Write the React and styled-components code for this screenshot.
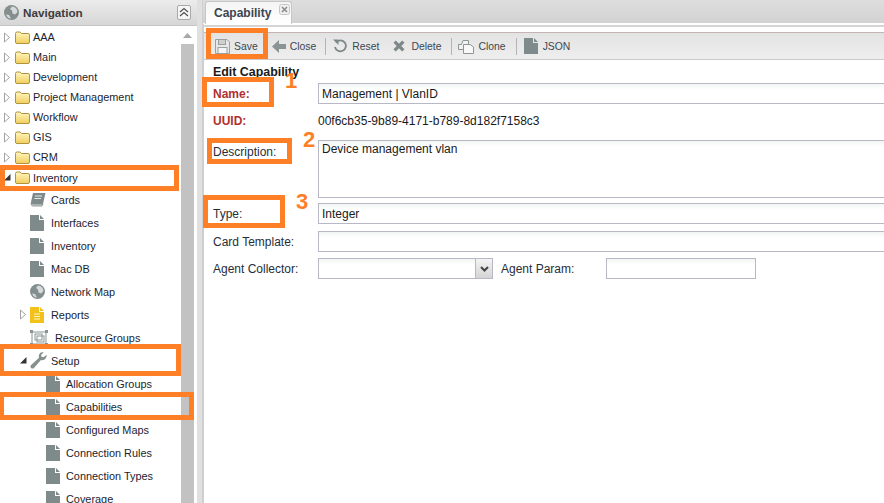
import React from "react";
import styled, { createGlobalStyle } from "styled-components";

const Global = createGlobalStyle`
  html, body { margin: 0; padding: 0; width: 884px; height: 503px; overflow: hidden; background: #fff; }
  body { font-family: "Liberation Sans", sans-serif; font-size: 10.9px; color: #1a1a1a; }
  * { box-sizing: border-box; }
`;

const Page = styled.div`
  position: relative;
  display: flex;
  width: 884px;
  height: 503px;
  overflow: hidden;
`;

/* ---------- navigation ---------- */
const Nav = styled.aside`
  width: 197px;
  flex: none;
  display: flex;
  flex-direction: column;
  background: #fff;
`;
const NavHeader = styled.header`
  height: 26px;
  flex: none;
  display: flex;
  align-items: center;
  padding: 0 6px 1px 4px;
  gap: 4px;
  background: linear-gradient(#ececec, #d6d6d6);
  border-bottom: 1px solid #c4c4c4;
`;
const NavTitle = styled.span`
  flex: 1;
  font-weight: 700;
  font-size: 11.7px;
  color: #3c3c3c;
`;
const Collapse = styled.span`
  width: 14px;
  height: 15px;
  display: flex;
  align-items: center;
  justify-content: center;
  background: #f6f6f6;
  border: 1px solid #a8a8a8;
  border-radius: 2px;
`;
const NavBody = styled.div`
  flex: 1;
  display: flex;
  min-height: 0;
`;
const Tree = styled.ul`
  list-style: none;
  margin: 0;
  padding: 1px 0 0;
  width: 181px;
  flex: none;
  overflow: hidden;
`;
const Row = styled.li`
  height: ${p => p.$h}px;
  display: flex;
  align-items: center;
  padding-left: ${p => p.$indent}px;
  white-space: nowrap;
  color: #1c2430;
`;
const Toggle = styled.span`
  width: 9px;
  height: 12px;
  flex: none;
  display: flex;
  align-items: center;
  margin-right: ${p => p.$gap}px;
`;
const RowIcon = styled.span`
  width: ${p => p.$w}px;
  display: flex;
  flex: none;
  align-items: center;
`;
const Scrollbar = styled.div`
  width: 13px;
  flex: none;
  display: flex;
  flex-direction: column;
  background: #fff;
`;
const ScrollUp = styled.div`
  height: 18px;
  flex: none;
  display: flex;
  align-items: center;
  justify-content: center;
`;
const ScrollThumb = styled.div`
  flex: 1;
  background: #c2c2c2;
`;
const Splitter = styled.div`
  width: 6px;
  flex: none;
  background: #e0e0e0;
  border-right: 1px solid #cfcfcf;
`;

/* ---------- main panel ---------- */
const Main = styled.main`
  flex: 1;
  min-width: 0;
  display: flex;
  flex-direction: column;
  background: #fff;
`;
const TabStrip = styled.div`
  height: 23px;
  flex: none;
  display: flex;
  align-items: flex-end;
  padding-left: 2px;
  background: linear-gradient(#dedede, #d2d2d2);
`;
const Tab = styled.div`
  width: 87px;
  height: 23px;
  margin-bottom: -1px;
  position: relative;
  display: flex;
  align-items: center;
  padding: 0 0 1px 8px;
  font-weight: 700;
  font-size: 12px;
  color: #3a4450;
  background: linear-gradient(#f4f4f4, #fff);
  border: 1px solid #c6c6c6;
  border-bottom: 0;
  border-radius: 3px 3px 0 0;
`;
const TabClose = styled.span`
  position: absolute;
  top: 2px;
  right: 1px;
  display: flex;
`;
const Band = styled.div`
  height: 9px;
  flex: none;
  background: #fff;
  border-top: 2px solid #fff;
  box-shadow: inset 0 2px 0 #d4d4d4;
  border-left: 1px solid #d0d0d0;
`;
const Content = styled.div`
  flex: 1;
  min-height: 0;
  border-left: 1px solid #cfcfcf;
  padding-left: 3px;
  background: #fff;
`;
const Toolbar = styled.div`
  height: 28px;
  margin-left: -3px;
  display: flex;
  align-items: center;
  padding-left: 11px;
  font-size: 10.4px;
  background: linear-gradient(#e3e3e3, #eeeeee);
  border-top: 1px solid #c4b4b4;
  border-bottom: 1px solid #cccccc;
`;
const ToolButton = styled.span`
  display: flex;
  align-items: center;
  gap: ${p => p.$gap ?? 4}px;
  margin-right: ${p => p.$mr ?? 0}px;
  color: #3c4650;
`;
const ToolSep = styled.span`
  width: 1px;
  height: 17px;
  flex: none;
  background: #b4b4b4;
  margin-right: ${p => p.$mr}px;
`;
const Form = styled.form`
  padding-left: 6px;
  margin: 0;
  font-size: 12px;
`;
const FormTitle = styled.h2`
  margin: 0;
  height: 23px;
  display: flex;
  align-items: center;
  font-size: 12.4px;
  font-weight: 700;
  color: #1a1a1a;
`;
const FieldRow = styled.div`
  display: flex;
  align-items: ${p => (p.$top ? "flex-start" : "center")};
  height: ${p => p.$h}px;
  margin-top: ${p => p.$mt ?? 0}px;
  padding-bottom: ${p => p.$pb ?? 0}px;
  white-space: nowrap;
`;
const Label = styled.label`
  width: 105px;
  flex: none;
  color: ${p => (p.$required ? "#b03030" : "#262e38")};
  font-weight: ${p => (p.$required ? 700 : 400)};
  line-height: ${p => (p.$top ? "24px" : "normal")};
`;
const InputBox = styled.div`
  flex: 1;
  min-width: 700px;
  height: 100%;
  padding: ${p => (p.$top ? "1px 3px" : "0 3px")};
  display: flex;
  align-items: ${p => (p.$top ? "flex-start" : "center")};
  border: 1px solid #b8b8c6;
  background: linear-gradient(#f2f5f4, #fff 6px);
  color: #1a1a1a;
`;
const Combo = styled.div`
  width: 175px;
  height: 100%;
  flex: none;
  display: flex;
  justify-content: flex-end;
  border: 1px solid #b8b8c6;
  background: linear-gradient(#f2f5f4, #fff 6px);
`;
const ComboButton = styled.span`
  width: 17px;
  display: flex;
  align-items: center;
  justify-content: center;
  background: linear-gradient(#f4f4f4, #d4d4d4);
  border-left: 1px solid #b8b8c6;
`;
const InlineLabel = styled.label`
  width: 105px;
  flex: none;
  margin-left: 8px;
  color: #262e38;
`;
const SmallInput = styled.div`
  width: 150px;
  height: 100%;
  flex: none;
  border: 1px solid #b8b8c6;
  background: linear-gradient(#f2f5f4, #fff 6px);
`;

/* ---------- annotations over the page ---------- */
const Mark = styled.div`
  position: absolute;
  left: ${p => p.$x}px;
  top: ${p => p.$y}px;
  width: ${p => p.$w}px;
  height: ${p => p.$h}px;
  border: 5px solid #ff7f27;
  pointer-events: none;
`;
const Num = styled.span`
  position: absolute;
  left: ${p => p.$x}px;
  top: ${p => p.$y}px;
  font: 700 22px/22px "Liberation Sans", sans-serif;
  color: #ff7f27;
`;

/* ---------- drawings ---------- */
const Folder = () => (
  <svg width="15" height="13" viewBox="0 0 15 13">
    <defs>
      <linearGradient id="fld" x1="0" y1="0" x2="0" y2="1">
        <stop offset="0" stopColor="#fff6c4" />
        <stop offset="1" stopColor="#f2cf5c" />
      </linearGradient>
    </defs>
    <path d="M.5 2.500Q.5 1 2 1H5L6.500 2.500H13Q14.500 2.500 14.500 4V11Q14.500 12.500 13 12.500H2Q.5 12.500 .5 11Z" fill="url(#fld)" stroke="#b2923e" />
  </svg>
);
const Arrow = ({ open }) =>
  open ? (
    <svg width="7" height="7" viewBox="0 0 7 7"><path d="M0 6.500H6.500V0Z" fill="#333" /></svg>
  ) : (
    <svg width="6" height="11" viewBox="0 0 6 11"><path d="M.5 1L5.500 5.500L.5 10Z" fill="#fff" stroke="#a4a4a4" /></svg>
  );
const Page1 = ({ fill = "#7f8a8a" }) => (
  <svg width="14" height="16" viewBox="0 0 14 16">
    <path d="M0 0H9V5H14V16H0Z" fill={fill} />
    <path d="M10 0L14 4H10Z" fill={fill} />
  </svg>
);
const Book = () => (
  <svg width="16" height="15" viewBox="0 0 16 15">
    <path d="M3 1H15.500L13 12H2Q.5 12 1 10Z" fill="#7f8a8a" />
    <path d="M1 11Q1 14 3 14H12L13 12H3Z" fill="#c8cccc" stroke="#7f8a8a" strokeWidth=".8" />
    <path d="M5 4H12M4.500 6.500H11" stroke="#e4e8e8" strokeWidth="1" />
  </svg>
);
const Globe = ({ size = 15 }) => (
  <svg width={size} height={size} viewBox="0 0 15 15">
    <circle cx="7.500" cy="7.500" r="7.500" fill="#858e8e" />
    <path d="M8 1.500Q13 2 13.500 7L11 9.500L8.500 8.500L8 5.500L6 4Z M2 9.500L5 10L7 13.500Q3.500 13.500 2 9.500Z" fill="#d6dada" />
  </svg>
);
const Report = () => (
  <svg width="14" height="16" viewBox="0 0 14 16">
    <path d="M0 0H9V5H14V16H0Z" fill="#f2c21a" />
    <path d="M10 0L14 4H10Z" fill="#f2c21a" />
    <path d="M4 7H10M4 9.500H10M4 12H10" stroke="#fff3c0" strokeWidth="1.200" />
  </svg>
);
const ResourceIcon = () => (
  <svg width="18" height="16" viewBox="0 0 18 16" fill="none">
    <rect x="2" y="2" width="14" height="12" stroke="#8a9494" />
    <rect x="5" y="4" width="7" height="6" stroke="#8a9494" />
    <rect x="7" y="6" width="7" height="6" stroke="#8a9494" />
    <path d="M0 0h3v3H0zM15 0h3v3h-3zM0 13h3v3H0zM15 13h3v3h-3z" fill="#8a9494" />
  </svg>
);
const Wrench = () => (
  <svg width="17" height="17" viewBox="0 0 16 16">
    <path d="M15.500 2.500L12.800 5L10.800 4.500L10.500 2.500L13 .4Q9.500-.4 8.500 2.500Q8 4 8.500 5.500L.8 12.500Q0 13.800 .8 14.800Q2 16.200 3.500 15.200L10.300 7.500Q12.500 8 14 6.800Q16 5 15.500 2.500Z" fill="#85908f" />
  </svg>
);
const DoubleUp = () => (
  <svg width="10" height="10" viewBox="0 0 10 10" fill="none" stroke="#555" strokeWidth="1.300">
    <path d="M1 5L5 1.500L9 5M1 9L5 5.500L9 9" />
  </svg>
);
const UpTri = () => (
  <svg width="9" height="5" viewBox="0 0 9 5"><path d="M0 5L4.500 0L9 5Z" fill="#a8a8a8" /></svg>
);
const SmallX = () => (
  <svg width="11" height="11" viewBox="0 0 11 11">
    <rect x=".5" y=".5" width="10" height="10" rx="2" fill="#efefef" stroke="#c6c6c6" />
    <path d="M3 3L8 8M8 3L3 8" stroke="#8c8c8c" strokeWidth="1.600" />
  </svg>
);
const SaveIcon = () => (
  <svg width="15" height="15" viewBox="0 0 15 15" fill="none" stroke="#9aa0a0">
    <path d="M.5 .5H12L14.500 3V14.500H.5Z" fill="#e8e8e8" />
    <rect x="3.500" y=".5" width="7" height="5" fill="#cfcfcf" />
    <rect x="3" y="8.500" width="9" height="6" fill="#f6f6f6" />
  </svg>
);
const BackArrow = () => (
  <svg width="14" height="13" viewBox="0 0 14 13"><path d="M7 0L0 6.500L7 13V9H14V4H7Z" fill="#8b9494" /></svg>
);
const ResetIcon = () => (
  <svg width="14" height="14" viewBox="0 0 14 14" fill="none">
    <path d="M3 3.500A5.500 5.500 0 1 1 2 8" stroke="#7e8888" strokeWidth="1.800" />
    <path d="M0 .5H5.500V6Z" fill="#7e8888" />
  </svg>
);
const DeleteIcon = () => (
  <svg width="12" height="12" viewBox="0 0 11 11"><path d="M1.500 1.500L9.500 9.500M9.500 1.500L1.500 9.500" stroke="#7e8888" strokeWidth="3" /></svg>
);
const CloneIcon = () => (
  <svg width="16" height="15" viewBox="0 0 16 15" fill="none" stroke="#8e9696">
    <path d="M.5 4.500H3.500L5 .5H10.500V9.500H.5Z" transform="translate(0 1)" fill="#f2f2f2" />
    <path d="M5.500 5.500H12L15.500 8V14.500H5.500Z" fill="#f8f8f8" />
  </svg>
);
const ChevronDown = () => (
  <svg width="9" height="6" viewBox="0 0 9 6" fill="none"><path d="M1 1L4.500 4.500L8 1" stroke="#444" strokeWidth="2" /></svg>
);

const top = ["AAA", "Main", "Development", "Project Management", "Workflow", "GIS", "CRM"];
const invItems = [
  ["Cards", <Book />],
  ["Interfaces", <Page1 />],
  ["Inventory", <Page1 />],
  ["Mac DB", <Page1 />],
  ["Network Map", <Globe />],
];
const setup = ["Allocation Groups", "Capabilities", "Configured Maps", "Connection Rules", "Connection Types", "Coverage"];

export default function App() {
  return (
    <Page>
      <Global />
      <Nav>
        <NavHeader>
          <Globe size={15} />
          <NavTitle>Navigation</NavTitle>
          <Collapse><DoubleUp /></Collapse>
        </NavHeader>
        <NavBody>
          <Tree>
            {top.map(t => (
              <Row key={t} $h={20} $indent={4}>
                <Toggle $gap={2}><Arrow /></Toggle>
                <RowIcon $w={18}><Folder /></RowIcon>
                {t}
              </Row>
            ))}
            <Row $h={21} $indent={4}>
              <Toggle $gap={2}><Arrow open /></Toggle>
              <RowIcon $w={18}><Folder /></RowIcon>
              Inventory
            </Row>
            {invItems.map(([t, i]) => (
              <Row key={t} $h={23} $indent={30}>
                <RowIcon $w={21}>{i}</RowIcon>
                {t}
              </Row>
            ))}
            <Row $h={23} $indent={20}>
              <Toggle $gap={1}><Arrow /></Toggle>
              <RowIcon $w={21}><Report /></RowIcon>
              Reports
            </Row>
            <Row $h={23} $indent={30}>
              <RowIcon $w={25}><ResourceIcon /></RowIcon>
              Resource Groups
            </Row>
            <Row $h={23} $indent={20}>
              <Toggle $gap={1}><Arrow open /></Toggle>
              <RowIcon $w={21}><Wrench /></RowIcon>
              Setup
            </Row>
            {setup.map(t => (
              <Row key={t} $h={23} $indent={46}>
                <RowIcon $w={20}><Page1 /></RowIcon>
                {t}
              </Row>
            ))}
          </Tree>
          <Scrollbar>
            <ScrollUp><UpTri /></ScrollUp>
            <ScrollThumb />
          </Scrollbar>
        </NavBody>
      </Nav>
      <Splitter />
      <Main>
        <TabStrip>
          <Tab>
            Capability
            <TabClose><SmallX /></TabClose>
          </Tab>
        </TabStrip>
        <Band />
        <Content>
          <Toolbar>
            <ToolButton $gap={4} $mr={14}><SaveIcon />Save</ToolButton>
            <ToolButton $gap={4} $mr={9}><BackArrow />Close</ToolButton>
            <ToolSep $mr={7} />
            <ToolButton $gap={5} $mr={14}><ResetIcon />Reset</ToolButton>
            <ToolButton $gap={6} $mr={10}><DeleteIcon />Delete</ToolButton>
            <ToolSep $mr={6} />
            <ToolButton $gap={4} $mr={10}><CloneIcon />Clone</ToolButton>
            <ToolSep $mr={7} />
            <ToolButton $gap={5}><Page1 />JSON</ToolButton>
          </Toolbar>
          <Form>
            <FormTitle>Edit Capability</FormTitle>
            <FieldRow $h={21}>
              <Label $required>Name:</Label>
              <InputBox>Management | VlanID</InputBox>
            </FieldRow>
            <FieldRow $h={36} $pb={3}>
              <Label $required>UUID:</Label>
              00f6cb35-9b89-4171-b789-8d182f7158c3
            </FieldRow>
            <FieldRow $h={58} $top>
              <Label $top>Description:</Label>
              <InputBox $top>Device management vlan</InputBox>
            </FieldRow>
            <FieldRow $h={21} $mt={5}>
              <Label>Type:</Label>
              <InputBox>Integer</InputBox>
            </FieldRow>
            <FieldRow $h={21} $mt={7}>
              <Label>Card Template:</Label>
              <InputBox />
            </FieldRow>
            <FieldRow $h={21} $mt={6}>
              <Label>Agent Collector:</Label>
              <Combo><ComboButton><ChevronDown /></ComboButton></Combo>
              <InlineLabel>Agent Param:</InlineLabel>
              <SmallInput />
            </FieldRow>
          </Form>
        </Content>
      </Main>

      <Mark $x={0} $y={165} $w={179} $h={26} />
      <Mark $x={-1} $y={344} $w={182} $h={32} />
      <Mark $x={-1} $y={392} $w={195} $h={28} />
      <Mark $x={206} $y={28} $w={62} $h={31} />
      <Mark $x={202} $y={77} $w={72} $h={30} />
      <Mark $x={207} $y={138} $w={85} $h={26} />
      <Mark $x={203} $y={195} $w={82} $h={33} />
      <Num $x={285} $y={70}>1</Num>
      <Num $x={303} $y={129}>2</Num>
      <Num $x={296} $y={191}>3</Num>
    </Page>
  );
}
